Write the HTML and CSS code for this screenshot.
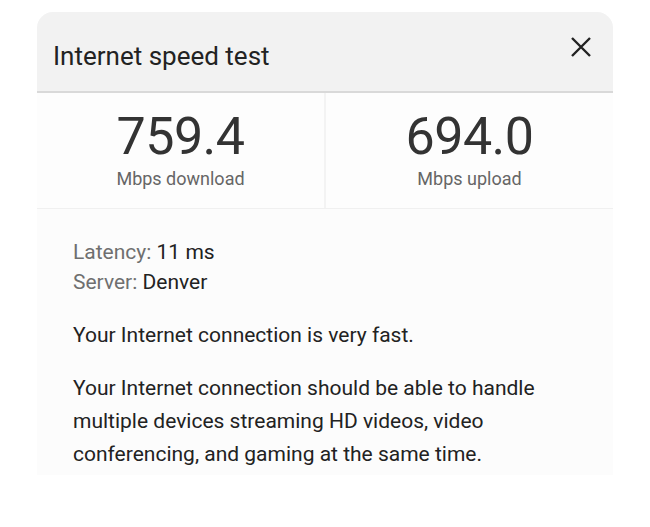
FILE: index.html
```html
<!DOCTYPE html>
<html lang="en">
<head>
  <meta charset="UTF-8" />
  <title>Internet speed test</title>
  <link rel="stylesheet" href="styles.css">
</head>
<body>
  <div class="card">
    <div class="card-header">
      <h2>Internet speed test</h2>
      <button class="close-btn" aria-label="Close">
        <svg width="22" height="22" viewBox="0 0 22 22">
          <path d="M2 2 L20 20 M20 2 L2 20" stroke="#222" stroke-width="2.4" fill="none" />
        </svg>
      </button>
    </div>

    <div class="stats">
      <div class="stat">
        <div class="stat-value">759.4</div>
        <div class="stat-label">Mbps download</div>
      </div>
      <div class="stat">
        <div class="stat-value">694.0</div>
        <div class="stat-label">Mbps upload</div>
      </div>
    </div>

    <div class="details">
      <div class="meta">
        <div><span class="meta-label">Latency:</span> 11 ms</div>
        <div><span class="meta-label">Server:</span> Denver</div>
      </div>
      <p class="summary">Your Internet connection is very fast.</p>
      <p class="summary">Your Internet connection should be able to handle multiple devices streaming HD videos, video conferencing, and gaming at the same time.</p>
    </div>
  </div>
</body>
</html>
```

FILE: styles.css
```css
body {
  margin: 0;
  font-family: Roboto, 'Liberation Sans', sans-serif;
  background-color: #fff;
  color: #222;
}

.card {
  width: 576px;
  margin: 12px 0 0 37px;
  border-radius: 16px 16px 0 0;
  overflow: hidden;
  background-color: #fcfcfc;
}

.card-header {
  display: flex;
  align-items: center;
  justify-content: space-between;
  height: 79px;
  padding: 0 21px 0 16px;
  background-color: #f2f2f2;
  border-bottom: 2px solid #d9d9d9;
}

h2 {
  margin: 8px 0 0;
  font-size: 26px;
  font-weight: 400;
  color: #222;
}

.close-btn {
  background: none;
  border: none;
  padding: 0;
  margin-top: -10px;
  cursor: pointer;
  display: flex;
}

.stats {
  display: flex;
  border-bottom: 1px solid #f0f0f0;
}

.stat {
  flex: 1;
  height: 115px;
  display: flex;
  flex-direction: column;
  align-items: center;
  justify-content: center;
  background-color: #fdfdfd;
}

.stat + .stat {
  border-left: 2px solid #f3f3f3;
}

.stat-value {
  font-size: 52px;
  line-height: 62px;
  color: #333;
  letter-spacing: -0.5px;
}

.stat-label {
  font-size: 18px;
  color: #666;
  line-height: 21px;
  margin-bottom: 6px;
}

.details {
  padding: 28px 70px 4px 36px;
  font-size: 21px;
}

.meta {
  line-height: 30px;
}

.meta-label {
  color: #6f6f6f;
}

.summary {
  margin: 22px 0 0;
  line-height: 33px;
}

.summary + .summary {
  margin-top: 20px;
}
```
